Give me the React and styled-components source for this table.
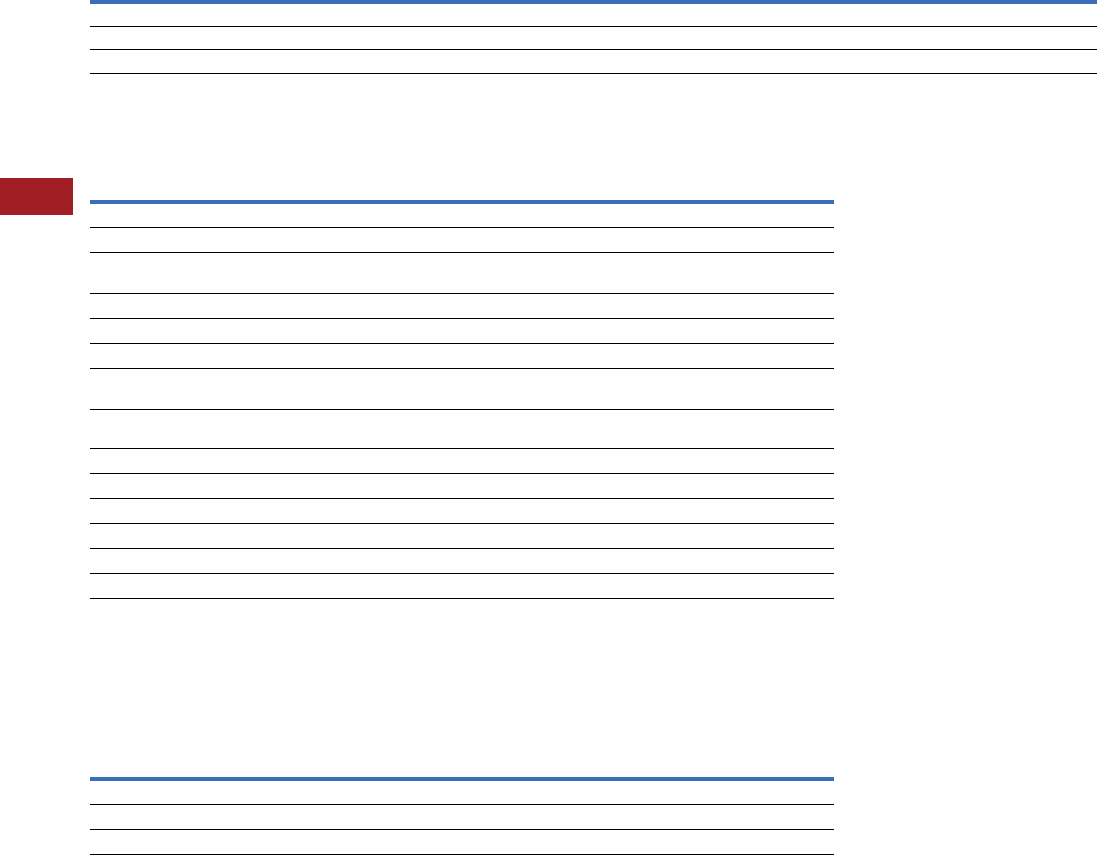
import React from "react";
import styled, { createGlobalStyle } from "styled-components";

const Global = createGlobalStyle`
  html, body { margin: 0; padding: 0; background: #ffffff; }
  body { font-family: "Liberation Sans", Arial, sans-serif; overflow: hidden; }
`;

const Page = styled.div`
  display: flex;
  width: 1097px;
  height: 855px;
  overflow: hidden;
`;

const Sidebar = styled.aside`
  width: 73px;
  flex: none;
  padding-top: 178px;
`;

const Tab = styled.div`
  width: 73px;
  height: 37px;
  background: #a11f24;
`;

const Main = styled.main`
  flex: 1;
  margin-left: 17px;
  display: flex;
  flex-direction: column;
`;

const Table = styled.div`
  width: ${(p) => p.$width}px;
  margin-top: ${(p) => p.$top || 0}px;
  border-top: 4px solid #3b6eb6;
  display: flex;
  flex-direction: column;
`;

const Row = styled.div`
  height: ${(p) => p.$h}px;
  border-bottom: 1px solid #000000;
  flex: none;
`;

const t1 = [22, 22, 23];
const t2 = [23, 24, 40, 24, 24, 24, 40, 38, 24, 24, 24, 24, 24, 24];
const t3 = [23, 24, 24];

export default function App() {
  return (
    <>
      <Global />
      <Page>
        <Sidebar>
          <Tab />
        </Sidebar>
        <Main>
          <Table $width={1007}>
            {t1.map((h, i) => (
              <Row key={i} $h={h} />
            ))}
          </Table>
          <Table $width={744} $top={126}>
            {t2.map((h, i) => (
              <Row key={i} $h={h} />
            ))}
          </Table>
          <Table $width={744} $top={178}>
            {t3.map((h, i) => (
              <Row key={i} $h={h} />
            ))}
          </Table>
        </Main>
      </Page>
    </>
  );
}
